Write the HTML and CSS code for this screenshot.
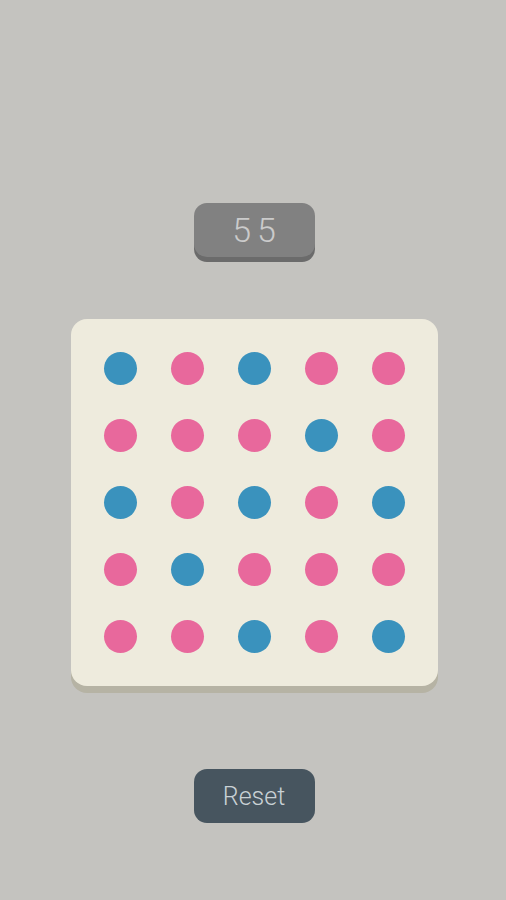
FILE: index.html
```html
<!DOCTYPE html>
<html lang="en">
<head>
    <meta charset="UTF-8">
    <meta name="viewport" content="width=device-width, initial-scale=1.0">
    <title>Dots</title>
    <link rel="stylesheet" href="styles.css">
</head>
<body>
    <div class="screen">
        <div class="score">55</div>

        <div class="board">
            <div class="dot blue"></div>
            <div class="dot pink"></div>
            <div class="dot blue"></div>
            <div class="dot pink"></div>
            <div class="dot pink"></div>

            <div class="dot pink"></div>
            <div class="dot pink"></div>
            <div class="dot pink"></div>
            <div class="dot blue"></div>
            <div class="dot pink"></div>

            <div class="dot blue"></div>
            <div class="dot pink"></div>
            <div class="dot blue"></div>
            <div class="dot pink"></div>
            <div class="dot blue"></div>

            <div class="dot pink"></div>
            <div class="dot blue"></div>
            <div class="dot pink"></div>
            <div class="dot pink"></div>
            <div class="dot pink"></div>

            <div class="dot pink"></div>
            <div class="dot pink"></div>
            <div class="dot blue"></div>
            <div class="dot pink"></div>
            <div class="dot blue"></div>
        </div>

        <button class="reset-button">Reset</button>
    </div>
</body>
</html>
```

FILE: styles.css
```css
body {
    margin: 0;
    background-color: #c4c3bf;
    font-family: Roboto, "Open Sans", sans-serif;
}
.screen {
    height: 900px;
    display: flex;
    flex-direction: column;
    align-items: center;
    padding-top: 203px;
    padding-left: 2px;
    box-sizing: border-box;
}
.score {
    width: 121px;
    height: 54px;
    background-color: #818181;
    border-radius: 13px;
    box-shadow: 0 5px 0 #6b6b6b;
    color: #cbcbcb;
    font-size: 34px;
    font-weight: 300;
    letter-spacing: 6px;
    text-indent: 6px;
    line-height: 54px;
    text-align: center;
}
.board {
    margin-top: 62px;
    width: 335px;
    padding: 16px;
    background-color: #eeebdd;
    border-radius: 16px;
    box-shadow: 0 7px 0 #b6b3a4;
    display: grid;
    grid-template-columns: repeat(5, 67px);
    grid-auto-rows: 67px;
    place-items: center;
}
.dot {
    width: 33px;
    height: 33px;
    border-radius: 50%;
}
.pink {
    background-color: #e8689c;
}
.blue {
    background-color: #3a92bd;
}
.reset-button {
    margin-top: 83px;
    width: 121px;
    height: 54px;
    background-color: #47555f;
    border: none;
    border-radius: 13px;
    color: #c9d1d5;
    font-family: Roboto, "Open Sans", sans-serif;
    font-size: 25px;
    font-weight: 300;
    cursor: pointer;
    padding: 0;
}
```
